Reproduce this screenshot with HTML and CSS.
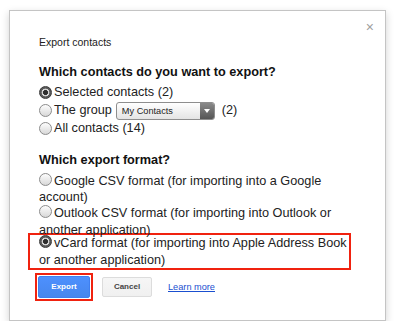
FILE: index.html
```html
<!DOCTYPE html>
<html>
<head>
<meta charset="utf-8">
<link rel="stylesheet" href="styles.css">
</head>
<body>
<div class="dialog">
  <div class="topbar"><span class="close">×</span></div>
  <div class="title">Export contacts</div>
  <div class="heading h1">Which contacts do you want to export?</div>
  <div class="row"><span class="radio on"></span><span>Selected contacts (2)</span></div>
  <div class="row group"><span class="radio"></span><span>The group</span>
    <span class="select"><span class="sel-text">My Contacts</span><span class="sel-arrow"></span></span>
    <span>(2)</span></div>
  <div class="row"><span class="radio"></span><span>All contacts (14)</span></div>
  <div class="heading h2">Which export format?</div>
  <div class="opt"><span class="radio"></span>Google CSV format (for importing into a Google account)</div>
  <div class="opt"><span class="radio"></span>Outlook CSV format (for importing into Outlook or another application)</div>
  <div class="opt highlight"><span class="radio on"></span>vCard format (for importing into Apple Address Book<br>or another application)</div>
  <div class="actions">
    <span class="hl-btn"><span class="btn primary">Export</span></span>
    <span class="btn">Cancel</span>
    <a class="link" href="#">Learn more</a>
  </div>
</div>
</body>
</html>
```
FILE: styles.css
```css
html, body {
  margin: 0;
  padding: 0;
  background: #fff;
}
body {
  font-family: "Liberation Sans", Arial, sans-serif;
  color: #222;
}
.dialog {
  margin: 10px 0 0 9px;
  width: 346px;
  height: 309px;
  border: 1px solid #c4c4c4;
  box-shadow: 0 3px 8px rgba(0,0,0,0.18);
  background: #fff;
  padding: 0 0 0 29px;
}
.topbar {
  display: flex;
  justify-content: flex-end;
  height: 25px;
  padding-right: 11px;
}
.close {
  font-size: 14px;
  line-height: 14px;
  color: #a0a0a0;
  margin-top: 9px;
}
.title {
  font-size: 10.5px;
  line-height: 13px;
  color: #222;
}
.heading {
  font-weight: bold;
  font-size: 12.7px;
  line-height: 15px;
  color: #111;
}
.h1 { margin-top: 16px; margin-bottom: 4px; }
.h2 { margin-top: 16px; margin-bottom: 5px; }
.row {
  display: flex;
  align-items: center;
  font-size: 12.7px;
  line-height: 16.5px;
  height: 16.5px;
}
.row.group { height: 19.5px; }
.radio {
  display: inline-block;
  width: 11px;
  height: 11px;
  border-radius: 50%;
  border: 1px solid #8c8c8c;
  background: linear-gradient(#fdfdfd, #d8d8d8);
  margin-right: 2px;
  flex: none;
  vertical-align: -1px;
}
.radio.on {
  border-color: #3a3a3a;
  background: radial-gradient(circle, #2e2e2e 0 2.2px, #d4d4d4 2.8px 3.6px, #5a5a5a 4.2px);
}
.select {
  display: inline-flex;
  width: 97px;
  height: 16px;
  border: 1px solid #8e8e8e;
  border-radius: 3px;
  background: linear-gradient(#ffffff, #e4e4e4);
  margin: 2px 7px 0 4px;
  overflow: hidden;
  flex: none;
}
.sel-text {
  flex: 1;
  font-size: 9.2px;
  line-height: 16px;
  padding-left: 5px;
  color: #222;
}
.sel-arrow {
  width: 14px;
  background: linear-gradient(#8a8a8a, #555);
  display: flex;
  align-items: center;
  justify-content: center;
}
.sel-arrow::after {
  content: "";
  border-left: 3px solid transparent;
  border-right: 3px solid transparent;
  border-top: 4px solid #fff;
}
.opt {
  font-size: 12.7px;
  line-height: 16.4px;
  padding-right: 16px;
}
.highlight {
  margin: -5px 0 0 -11px;
  width: 310px;
  padding: 0 0 0 9px;
  border: 2px solid #f0220f;
  white-space: nowrap;
}
.actions {
  display: flex;
  align-items: center;
  margin-top: 3px;
  margin-left: -4px;
}
.hl-btn {
  border: 2px solid #f0220f;
  padding: 1px;
  display: inline-flex;
}
.btn {
  display: inline-flex;
  align-items: center;
  justify-content: center;
  height: 18px;
  width: 48px;
  border: 1px solid #dcdcdc;
  border-radius: 2px;
  background: linear-gradient(#f6f6f6, #f0f0f0);
  color: #444;
  font-weight: bold;
  font-size: 8px;
  margin-left: 9px;
}
.btn.primary {
  margin-left: 0;
  width: 50px;
  height: 20px;
  border-color: #3f7ff0;
  background: linear-gradient(#4d90fe, #4787ed);
  color: #fff;
}
.link {
  margin-left: 16px;
  font-size: 9.2px;
  color: #1a4fd0;
  text-decoration: underline;
}
```
